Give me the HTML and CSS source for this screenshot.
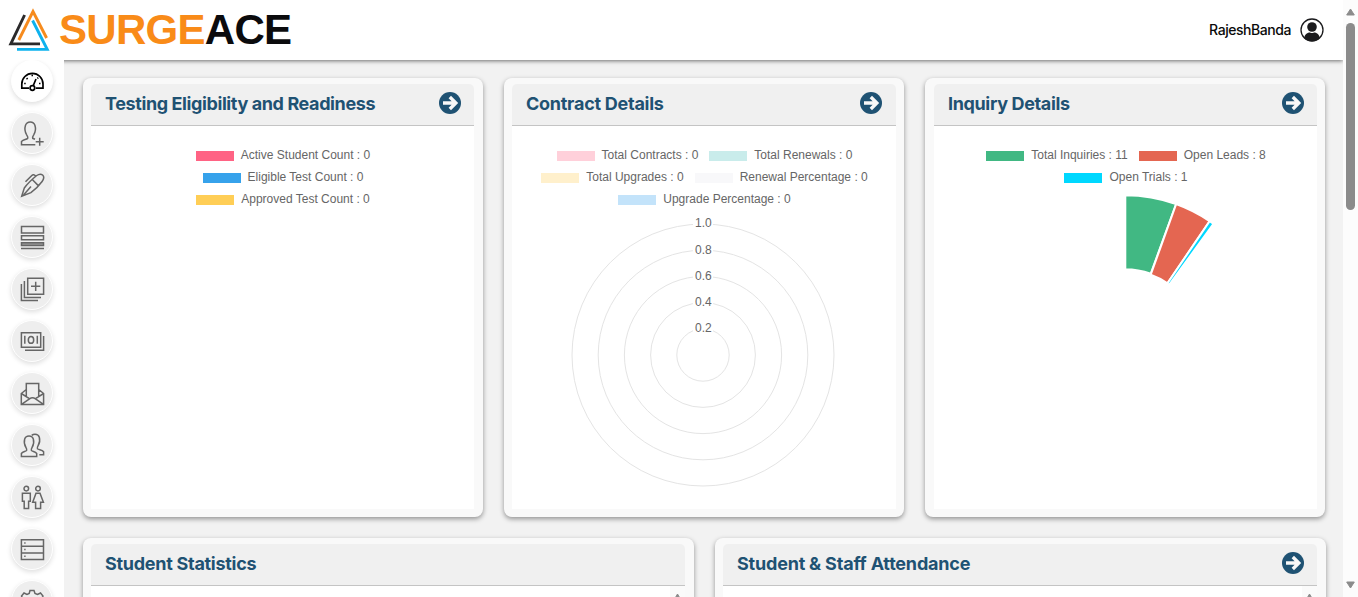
FILE: index.html
```html
<!DOCTYPE html>
<html lang="en">
<head>
<meta charset="utf-8">
<title>SurgeAce Dashboard</title>
<link rel="stylesheet" href="styles.css">
</head>
<body>
<svg class="defs" width="0" height="0">
  <symbol id="go" viewBox="0 0 22 22">
    <circle cx="11" cy="11" r="11" fill="#1f5273"/>
    <path d="M4 11h12M10.8 5l6 6-6 6" fill="none" stroke="#f8f8f8" stroke-width="3.4"/>
  </symbol>
</svg>
<div class="app">
  <div class="page">
    <header class="topbar">
      <div class="brand">
        <svg class="brand-mark" width="52" height="60" viewBox="0 0 52 60" fill="none" stroke-width="2.9">
          <path d="M24.6 15L10.8 43.9H40" stroke="#2b2a2b"/>
          <path d="M18.8 40L33 11.5L46.6 38" stroke="#f68b1e"/>
          <path d="M32.6 20.5L47.2 49.4H17" stroke="#0db2ee"/>
        </svg>
        <div class="brand-name"><span class="surge">SURGE</span><span class="ace">ACE</span></div>
      </div>
      <div class="user">
        <span>RajeshBanda</span>
        <svg width="24" height="24" viewBox="0 0 24 24">
          <circle cx="12" cy="12" r="11" fill="#fff" stroke="#1b1b1d" stroke-width="1.3"/>
          <circle cx="12" cy="9" r="4.8" fill="#1b1b1d"/>
          <path d="M4 20c1-4 3.500-5.600 6-5.600q2 1 4 0c2.500 0 5 1.600 6 5.600a11.300 11.300 0 0 1-16 0z" fill="#1b1b1d"/>
        </svg>
      </div>
    </header>
    <div class="body">
      <nav class="sidebar">
        <a class="nav-btn active"><svg viewBox="0 0 24 24"><path d="M9 19.200H1.800V15a10.600 10.600 0 0 1 21.200 0v4.200h-7.200M13.200 16.800L16 10"/><circle cx="12.400" cy="19" r="2.300"/><path d="M4.200 14.500h1.500M6.600 9.200l1 1M11.500 6.300h1.500M19 14.500h1.500M18.200 8.700l-.8.8"/></svg></a>
        <a class="nav-btn"><svg viewBox="0 0 24 24"><path d="M15.300 23.700H1.500v-3.200c2-2 4.500-1.800 6.200-3.200.5-1-.2-2.300-1-3.500C5 11 4.600 7 5.500 4.200c.8-2.200 2.500-3.300 4.700-3.300s4 1.100 4.700 3.300c.9 2.800.5 6.800-1.200 9.600-.8 1.200-1.500 2.500-1 3.500l2.300 1M19.700 16.700v8M15.700 20.700h8"/></svg></a>
        <a class="nav-btn"><svg viewBox="0 0 24 24"><path d="M1.700 23.300l2.600-8.300C7 11.300 13 5.500 16.700 2.500c2.300-1.600 4.400-1.700 5.900-.5 1.500 1.400 1.400 3.900-.5 6.500-3 4-7.300 8.500-11.200 11.200zM12.500 6.800l5.800 5.800M3.500 22l7.500-8.500M5.500 8.800l6.300-6.300c1.200-1.200 2.500-.8 3.700.6"/></svg></a>
        <a class="nav-btn"><svg viewBox="0 0 24 24"><path d="M1.500 1.500h22v6.600h-22zM1.500 10.800h22v4h-22zM1 23.600h23"/><path d="M1.500 17.700h22v2.700h-22z" fill="#999"/></svg></a>
        <a class="nav-btn"><svg viewBox="0 0 24 24"><path d="M7.700 1.300h15.900v16H7.700zM15.700 4.700v9.300M11 9.300h9.300M4.400 4v16.500H21M1.400 7v16.500H18"/></svg></a>
        <a class="nav-btn"><svg viewBox="0 0 24 24"><path d="M1.400 3.700h19.300v14.500H1.400zM23.600 7v14.300H5M4.800 6.700v8M17.300 6.700v8"/><ellipse cx="11" cy="10.900" rx="2.700" ry="3.400"/></svg></a>
        <a class="nav-btn"><svg viewBox="0 0 24 24"><path d="M6.300 8.500l-5 4v11h22.300v-11l-4.900-4M6.300 15.500v-13h12.400v13M1.300 12.500l8.500 5.400M23.600 12.500l-8.500 5.400M1.500 23.300l8-5.500q3-2 6 0l8 5.500"/></svg></a>
        <a class="nav-btn"><svg viewBox="0 0 24 24"><path d="M1.400 23.500h15.300v-3c-1.500-2-4-1.800-5.300-3-.5-1 0-2 .7-3.200 1.500-2.500 1.900-6 1.200-8.400C12.700 3.900 11 2.900 9 2.900S5.300 3.900 4.700 5.900c-.7 2.400-.3 5.900 1.200 8.400.7 1.200 1.200 2.200.7 3.200-1.300 1.200-3.800 1-5.200 3zM11.700 2.300c1-.8 2-1.100 3.300-1.100 2.200 0 3.700 1 4.300 3 .7 2.400.3 5.900-1.200 8.400-.7 1.200-1.200 2.200-.7 3.200 1.300 1.200 4.700 1 6.200 3v3h-4.300"/></svg></a>
        <a class="nav-btn"><svg viewBox="0 0 24 24"><circle cx="6.300" cy="3.600" r="2.300"/><circle cx="18" cy="3.600" r="2.300"/><path d="M2.400 8.300h7.900v8H8.600v7.300H4.200v-7.300H2.400zM16 8.300h4l3.400 9h-2.800v6.300h-5V17.300h-2.900z"/></svg></a>
        <a class="nav-btn"><svg viewBox="0 0 24 24"><path d="M1.400 2.700h22.100v19.800H1.400zM1.400 9.300h22.100M1.400 15.900h22.100M4.200 6h1.400M4.200 12.600h1.400M4.200 19.200h1.400"/></svg></a>
        <a class="nav-btn"><svg viewBox="0 0 24 24"><path d="M10 1.500h4l1 3 2.500 1 3-1.500 2.500 3-1.500 3 .8 2.500v3l-3 6-5 2h-5l-5-3-2.500-5v-3L3 9.500 1.500 7 4 4l3 1.500 2.200-1z"/><circle cx="12" cy="13" r="4"/></svg></a>
      </nav>
      <main class="content">
        <div class="row thirds">
          <section class="card tall">
            <div class="card-head"><h2 class="t-testing">Testing Eligibility and Readiness</h2><svg class="go"><use href="#go"/></svg></div>
            <div class="card-body">
              <div class="legend">
                <div class="legend-row"><span class="item"><i class="swatch pink"></i>Active Student Count : 0</span></div>
                <div class="legend-row"><span class="item"><i class="swatch blue"></i>Eligible Test Count : 0</span></div>
                <div class="legend-row"><span class="item"><i class="swatch yellow"></i>Approved Test Count : 0</span></div>
              </div>
            </div>
          </section>
          <section class="card tall contract">
            <div class="card-head"><h2 class="t-contract">Contract Details</h2><svg class="go"><use href="#go"/></svg></div>
            <div class="card-body">
              <div class="legend">
                <div class="legend-row"><span class="item"><i class="swatch pink-l"></i>Total Contracts : 0</span><span class="item"><i class="swatch teal-l"></i>Total Renewals : 0</span></div>
                <div class="legend-row"><span class="item"><i class="swatch yellow-l"></i>Total Upgrades : 0</span><span class="item"><i class="swatch grey-l"></i>Renewal Percentage : 0</span></div>
                <div class="legend-row"><span class="item"><i class="swatch blue-l"></i>Upgrade Percentage : 0</span></div>
              </div>
              <svg class="plot" width="383" height="290" viewBox="512 210 383 290">
                <g fill="none" stroke="#e4e4e4">
                  <circle cx="703" cy="355" r="26.200"/><circle cx="703" cy="355" r="52.400"/><circle cx="703" cy="355" r="78.600"/><circle cx="703" cy="355" r="104.800"/><circle cx="703" cy="355" r="131"/>
                </g>
                <g fill="#fff">
                  <path d="M693 215h20v16h-20zM693 242h20v16h-20zM693 268h20v16h-20zM693 294h20v16h-20zM693 320h20v16h-20z"/>
                </g>
                <g class="ticks"><text x="703.300" y="227">1.0</text><text x="703.300" y="254">0.8</text><text x="703.300" y="280">0.6</text><text x="703.300" y="306">0.4</text><text x="703.300" y="332">0.2</text></g>
              </svg>
            </div>
          </section>
          <section class="card tall inquiry">
            <div class="card-head"><h2 class="t-inquiry">Inquiry Details</h2><svg class="go"><use href="#go"/></svg></div>
            <div class="card-body">
              <div class="legend">
                <div class="legend-row"><span class="item"><i class="swatch green"></i>Total Inquiries : 11</span><span class="item"><i class="swatch red"></i>Open Leads : 8</span></div>
                <div class="legend-row"><span class="item"><i class="swatch cyan"></i>Open Trials : 1</span></div>
              </div>
              <svg class="plot" width="383" height="312" viewBox="-191.300 -157.300 383 312" stroke="#fff" stroke-width="2">
                <path fill="#41b883" d="M0-150A150 150 0 0 1 50.810-141.130L25.400-71.500A76 76 0 0 0 0-76z"/>
                <path fill="#e46651" d="M50.810-141.130A150 150 0 0 1 84.310-124.060L42.160-62.030A75 75 0 0 0 25.400-70.570z"/>
                <path fill="#00d8ff" d="M84.310-124.060A150 150 0 0 1 88.170-121.350L44.080-60.680A75 75 0 0 0 42.160-62.030z"/>
              </svg>
            </div>
          </section>
        </div>
        <div class="row halves">
          <section class="card">
            <div class="card-head"><h2 class="t-stats">Student Statistics</h2></div>
            <div class="card-body scroll"><div class="mini-bar"><svg width="9" height="8" viewBox="0 0 9 8"><path d="M4.500 1L8 7H1z" fill="#8b8b8b" stroke="#8b8b8b" stroke-linejoin="round"/></svg></div></div>
          </section>
          <section class="card">
            <div class="card-head"><h2 class="t-attend">Student &amp; Staff Attendance</h2><svg class="go"><use href="#go"/></svg></div>
            <div class="card-body scroll"><div class="mini-bar"><svg width="9" height="8" viewBox="0 0 9 8"><path d="M4.500 1L8 7H1z" fill="#8b8b8b" stroke="#8b8b8b" stroke-linejoin="round"/></svg></div></div>
          </section>
        </div>
      </main>
    </div>
  </div>
  <div class="scrollbar">
    <svg width="9" height="8" viewBox="0 0 9 8"><path d="M4.500 1L8.300 7H.7z" fill="#8b8b8b" stroke="#8b8b8b" stroke-linejoin="round"/></svg>
    <div class="thumb"></div>
    <svg class="down" width="9" height="8" viewBox="0 0 9 8"><path d="M4.500 7L8.300 1H.7z" fill="#8b8b8b" stroke="#8b8b8b" stroke-linejoin="round"/></svg>
  </div>
</div>
</body>
</html>
```
FILE: styles.css
```css
* { box-sizing: border-box; }
body { margin: 0; overflow: hidden; font-family: Inter, sans-serif; }
.defs { display: block; }
.app { display: flex; width: 1358px; height: 597px; overflow: hidden; }
.page { width: 1343px; display: flex; flex-direction: column; overflow: hidden; }

.topbar { height: 60px; flex: none; display: flex; justify-content: space-between; background: #fff; box-shadow: 0 1px 4px rgba(0,0,0,.55); z-index: 1; }
.brand { display: flex; }
.brand-mark { margin-right: 7px; }
.brand-name { font: bold 42px/60px "Liberation Sans", Arial, sans-serif; letter-spacing: -.7px; }
.surge { color: #f98b18; }
.ace { color: #0b0b0d; }
.user { display: flex; align-items: center; gap: 9px; margin-right: 19px; font-size: 14px; font-weight: 500; letter-spacing: -.45px; color: #0a0a0a; }
.user span { margin-top: -2px; }

.body { display: flex; height: 537px; }
.sidebar { width: 64px; flex: none; background: #fff; display: flex; flex-direction: column; align-items: center; gap: 10px; z-index: 2; overflow: hidden; }
.nav-btn { width: 42px; height: 42px; flex: none; border: 1px solid #fff; border-radius: 50%; background: #eee; box-shadow: 0 2px 5px rgba(0,0,0,.13); display: flex; align-items: center; justify-content: center; }
.nav-btn svg { width: 24px; height: 24px; overflow: visible; fill: none; stroke: #666; stroke-width: 1.5; }
.nav-btn.active { background: #fff; }
.nav-btn.active svg { stroke: #000; stroke-width: 1.7; }

.content { flex: 1; background: #f2f2f2; padding: 18px 17px 0 19px; height: 537px; overflow: hidden; }
.row { display: grid; column-gap: 21px; margin-bottom: 21px; }
.thirds { grid-template-columns: 400px 400px 400px; }
.halves { grid-template-columns: 611px 611px; }
.card { height: 439px; padding: 6px 9px 8px 8px; border-radius: 8px; background: #f9f9f9; box-shadow: 0 2px 5px rgba(0,0,0,.4); display: flex; flex-direction: column; }
.card.contract { padding-right: 8px; }
.card.contract .card-head { padding-right: 14px; }
.card.inquiry { padding-left: 9px; padding-right: 8px; }
.card-head { height: 42px; flex: none; padding: 0 13px 0 14px; border-bottom: 1px solid #c4c4c4; border-radius: 5px 5px 0 0; background: #f0f0f0; display: flex; align-items: center; justify-content: space-between; }
.card-head h2 { margin: -1px 0 0; font-size: 18px; line-height: 24px; font-weight: 700; color: #1f5273; white-space: nowrap; }
.t-testing { letter-spacing: -.4px; }
.t-contract { letter-spacing: -.26px; }
.t-inquiry { letter-spacing: -.36px; }
.t-stats { letter-spacing: -.28px; }
.t-attend { letter-spacing: -.2px; }
.go { width: 22px; height: 22px; margin-top: -3px; }
.card-body { flex: 1; background: #fff; padding-top: 18px; display: flex; flex-direction: column; }
.card-body.scroll { padding-top: 0; align-items: flex-end; }
.mini-bar { width: 15px; flex: 1; background: #fafafa; display: flex; justify-content: center; padding-top: 7px; }

.legend { padding-left: 1px; font: 12px/22px "Liberation Sans", Arial, sans-serif; color: #666; }
.legend-row { display: flex; height: 22px; justify-content: center; gap: 11px; }
.item { display: flex; align-items: center; gap: 7px; white-space: nowrap; }
.swatch { width: 38px; height: 10px; margin-top: 2px; }
.pink { background: #ff6384; }
.blue { background: #36a2eb; }
.yellow { background: #ffce56; }
.pink-l { background: #ffd0da; }
.teal-l { background: #c9eceb; }
.yellow-l { background: #fff0cc; }
.grey-l { background: #f8f8fa; }
.blue-l { background: #c3e3fa; }
.green { background: #41b883; }
.red { background: #e46651; }
.cyan { background: #00d8ff; }
.plot { flex: none; display: block; }
.ticks { font: 12px "Liberation Sans", Arial, sans-serif; fill: #666; text-anchor: middle; }

.scrollbar { width: 15px; height: 597px; background: #fcfcfc; display: flex; flex-direction: column; align-items: center; padding: 8px 0; }
.thumb { width: 9px; height: 187px; margin-top: 7px; border-radius: 5px; background: #8b8b8b; }
.down { margin-top: auto; }
```
